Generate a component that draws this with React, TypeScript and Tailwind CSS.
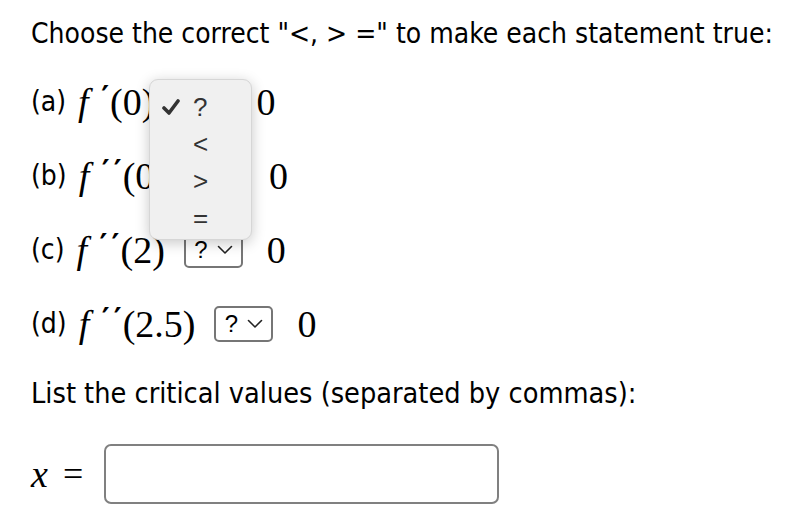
import React from 'react';

const sans = { fontFamily: '"DejaVu Sans Condensed", "DejaVu Sans", sans-serif' };

const Prime = () => (
    <span className="inline-block w-[12px] font-[family-name:'DejaVu_Sans',sans-serif] font-bold not-italic text-[30px] leading-none text-center relative -top-[5px]">
        ′
    </span>
);

const Fn = ({ primes, arg }: { primes: number; arg: string }) => (
    <span className="inline-flex items-center font-[family-name:'Liberation_Serif',serif] text-[38px] leading-none text-black">
        <span className="italic w-[21px]">f</span>
        {Array.from({ length: primes }).map((_, i) => (
            <Prime key={i} />
        ))}
        <span className="-ml-[1px]">({arg})</span>
    </span>
);

const Select = ({ covered }: { covered?: boolean }) => (
    <div className={`w-[59px] h-[36px] border-2 border-[#767676] rounded-[5px] flex items-center justify-center gap-[9px] font-[family-name:'Liberation_Sans',sans-serif] text-[24px] leading-none text-black bg-white ${covered ? 'invisible' : ''}`}>
        <span>?</span>
        <svg width="16" height="10" viewBox="0 0 16 10" fill="none">
            <path d="M1.5 1.5 L8 8 L14.5 1.5" stroke="#222" strokeWidth="1.6" strokeLinecap="round" strokeLinejoin="round" />
        </svg>
    </div>
);

const Row = ({ label, primes, arg, covered }: { label: string; primes: number; arg: string; covered?: boolean }) => (
    <div className="h-[74px] flex items-center">
        <span className="text-[28px] text-black mr-[12px]" style={sans}>{label}</span>
        <Fn primes={primes} arg={arg} />
        <div className="ml-[19px]">
            <Select covered={covered} />
        </div>
        <span className="font-[family-name:'Liberation_Serif',serif] text-[38px] leading-none text-black ml-[24px]">0</span>
    </div>
);

export default function App() {
    return (
        <div className="relative w-[790px] h-[518px] bg-white overflow-hidden pl-[31px] pt-[16px]">
            <div className="h-[36px] flex items-center text-[28px] text-black" style={sans}>
                Choose the correct "&lt;, &gt; =" to make each statement true:
            </div>
            <div className="mt-[13px]">
                <Row label="(a)" primes={1} arg="0" covered />
                <Row label="(b)" primes={2} arg="0" covered />
                <Row label="(c)" primes={2} arg="2" />
                <Row label="(d)" primes={2} arg="2.5" />
            </div>
            <div className="mt-[14px] h-[36px] flex items-center text-[28.6px] text-black" style={sans}>
                List the critical values (separated by commas):
            </div>
            <div className="mt-[33px] flex items-center">
                <span className="font-[family-name:'Liberation_Serif',serif] italic text-[38px] leading-none text-black">x</span>
                <span className="font-[family-name:'Liberation_Serif',serif] text-[36px] leading-none text-black ml-[15px]">=</span>
                <input className="ml-[21px] w-[395px] h-[60px] border-2 border-[#808080] rounded-[7px] bg-white outline-none" />
            </div>

            {/* open dropdown of (a) */}
            <div className="absolute left-[149px] top-[79px] w-[103px] h-[161px] bg-[#f0f0f0] rounded-[9px] border border-[#d6d6d6] shadow-[0_3px_14px_rgba(0,0,0,0.22)] pt-[8px] font-[family-name:'Liberation_Sans',sans-serif] text-[26px] leading-none text-[#333]">
                <div className="h-[37px] flex items-center">
                    <svg className="ml-[12px]" width="18" height="16" viewBox="0 0 18 16">
                        <path d="M2 9 L7 14 L16 2" stroke="#333" strokeWidth="3.6" fill="none" strokeLinecap="round" strokeLinejoin="round" />
                    </svg>
                    <span className="ml-[13px]">?</span>
                </div>
                <div className="h-[37px] flex items-center pl-[43px]">&lt;</div>
                <div className="h-[37px] flex items-center pl-[43px]">&gt;</div>
                <div className="h-[37px] flex items-center pl-[43px]">=</div>
            </div>
        </div>
    );
}
